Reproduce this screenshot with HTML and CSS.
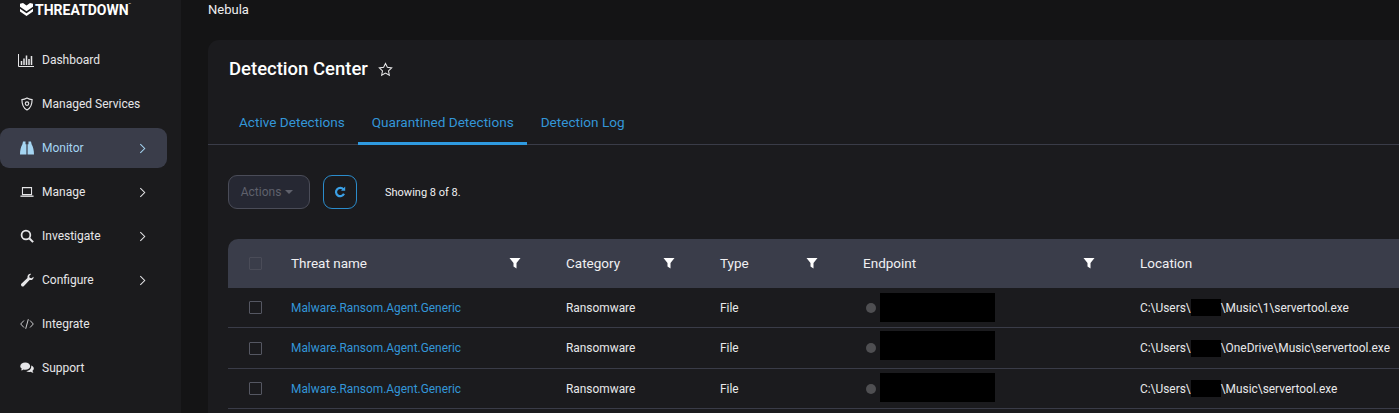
FILE: index.html
```html
<!DOCTYPE html>
<html lang="en">
<head>
  <meta charset="UTF-8">
  <title>Detection Center</title>
  <link rel="stylesheet" href="styles.css">
</head>
<body>

<div class="app">
  <aside class="sidebar">
    <div class="logo">
      <svg class="logo-mark" viewBox="0 0 13 13" fill="#fff"><path d="M0 .8 3 0l3.500 2.400L10 0l3 .8v3L6.500 8.200 0 3.800z"/><path d="M0 5.800l6.500 4.400L13 5.800v2.600L6.500 13 0 8.400z"/></svg>
      <span class="logo-text">THREATDOWN</span><span class="logo-tm">™</span>
    </div>
    <nav class="nav">
      <a class="nav-item">
        <svg class="nav-icon wide" viewBox="0 0 16 13" fill="none" stroke="currentColor"><path d="M.5 0v12.500H16" stroke-width="1"/><path d="M3.500 7v4M6 4.500V11M8.500 1.500V11M11 5v6M13.500 2v9" stroke-width="1.500"/></svg>
        <span>Dashboard</span>
      </a>
      <a class="nav-item">
        <svg class="nav-icon" viewBox="0 0 16 16" fill="none" stroke="currentColor" stroke-width="1.300"><path d="M8 1.200c2 1.200 3.800 1.700 5.800 1.800 0 5-1.500 9.500-5.800 11.800C3.700 12.500 2.200 8 2.200 3 4.200 2.900 6 2.400 8 1.200z"/><circle cx="8" cy="7.500" r="2"/></svg>
        <span>Managed Services</span>
      </a>
      <a class="nav-item active">
        <svg class="nav-icon" viewBox="0 0 14 14" fill="currentColor"><path d="M3 .5h2.500v2.800h.9v10.200H0c0-4.300.9-7.800 2.400-10.200zM11 .5H8.500v2.800h-.9v10.200H14c0-4.300-.9-7.800-2.400-10.200z"/></svg>
        <span>Monitor</span>
        <svg class="chevron" viewBox="0 0 8 12" fill="none" stroke="currentColor" stroke-width="1.200"><path d="M1.500 1 6.500 6l-5 5"/></svg>
      </a>
      <a class="nav-item">
        <svg class="nav-icon" viewBox="0 0 16 16" fill="none" stroke="currentColor" stroke-width="1.200"><path d="M2.800 3h10.400v8H2.800z"/><path d="M.5 12.800h15" stroke-width="1.500"/></svg>
        <span>Manage</span>
        <svg class="chevron" viewBox="0 0 8 12" fill="none" stroke="currentColor" stroke-width="1.200"><path d="M1.500 1 6.500 6l-5 5"/></svg>
      </a>
      <a class="nav-item">
        <svg class="nav-icon" viewBox="0 0 16 16" fill="none" stroke="currentColor" stroke-width="2"><circle cx="6.800" cy="6.800" r="5"/><path d="m10.500 10.500 4.500 4.500" stroke-width="2.400"/></svg>
        <span>Investigate</span>
        <svg class="chevron" viewBox="0 0 8 12" fill="none" stroke="currentColor" stroke-width="1.200"><path d="M1.500 1 6.500 6l-5 5"/></svg>
      </a>
      <a class="nav-item">
        <svg class="nav-icon" viewBox="0 0 16 16" fill="currentColor"><path d="M15.500 4.200c.4 2-1.400 4.200-3.700 3.900-.5-.1-.8 0-1.100.3l-6.200 6.500c-.8.8-2.100.8-2.800 0-.8-.8-.7-2 .1-2.800l6.400-6c.3-.3.4-.7.3-1.100C8.200 2.600 10.500.5 12.700 1l-2.200 2.300.5 2.200 2.200.5z"/></svg>
        <span>Configure</span>
        <svg class="chevron" viewBox="0 0 8 12" fill="none" stroke="currentColor" stroke-width="1.200"><path d="M1.500 1 6.500 6l-5 5"/></svg>
      </a>
      <a class="nav-item">
        <svg class="nav-icon" viewBox="0 0 16 16" fill="none" stroke="currentColor" stroke-width="1"><path d="M4.500 4 .8 8l3.700 4M11.500 4l3.700 4-3.700 4M9.500 2.500l-3 11"/></svg>
        <span>Integrate</span>
      </a>
      <a class="nav-item">
        <svg class="nav-icon" viewBox="0 0 16 16" fill="currentColor"><path d="M6 1.800c3.100 0 5.600 1.800 5.600 4.100S9.100 10 6 10c-.7 0-1.400-.1-2-.3-.8.6-1.800 1-3 1 .6-.6 1-1.300 1.100-2C.9 8 .3 7 .3 5.900.3 3.600 2.900 1.800 6 1.800z"/><path d="M12.800 5.200c1.800.5 3 1.800 3 3.400 0 1-.5 1.900-1.500 2.600.1.800.5 1.600 1.100 2.200-1.200 0-2.300-.4-3.100-1.100-.6.200-1.200.3-1.900.3-1.300 0-2.500-.4-3.300-1.100 3.500 0 6.200-2.500 5.700-6.300z"/></svg>
        <span>Support</span>
      </a>
    </nav>
  </aside>

  <main class="main">
    <div class="topbar">Nebula</div>
    <section class="card">
      <header class="card-head">
        <h1 class="card-title">Detection Center</h1>
        <svg class="star" viewBox="0 0 16 16" fill="none" stroke="currentColor" stroke-width="1.100"><path d="m8 1.500 2 4.200 4.600.6-3.400 3.200.9 4.600L8 11.800l-4.100 2.300.9-4.600L1.400 6.300 6 5.700z"/></svg>
      </header>

      <div class="tabs">
        <a class="tab">Active Detections</a>
        <a class="tab selected">Quarantined Detections</a>
        <a class="tab">Detection Log</a>
      </div>

      <div class="toolbar">
        <button class="actions-btn">Actions <span class="caret"></span></button>
        <button class="refresh-btn">
          <svg viewBox="0 0 12 12" fill="none" stroke="currentColor" stroke-width="2.200"><path d="M10 7.800A4.200 4.200 0 1 1 9.500 3.400"/><path d="M11.200 .6v4.200H7z" fill="currentColor" stroke="none"/></svg>
        </button>
        <span class="showing">Showing 8 of 8.</span>
      </div>

      <div class="table">
        <div class="row head">
          <div class="cell-check"><span class="checkbox disabled"></span></div>
          <div class="cell-head">Threat name<svg class="filter" viewBox="0 0 12 12" fill="currentColor"><path d="M.5 1h11L7.500 6v5.500l-3-2V6z"/></svg></div>
          <div class="cell-head">Category<svg class="filter" viewBox="0 0 12 12" fill="currentColor"><path d="M.5 1h11L7.500 6v5.500l-3-2V6z"/></svg></div>
          <div class="cell-head">Type<svg class="filter" viewBox="0 0 12 12" fill="currentColor"><path d="M.5 1h11L7.500 6v5.500l-3-2V6z"/></svg></div>
          <div class="cell-head">Endpoint<svg class="filter" viewBox="0 0 12 12" fill="currentColor"><path d="M.5 1h11L7.500 6v5.500l-3-2V6z"/></svg></div>
          <div class="cell-head">Location</div>
        </div>

        <div class="row">
          <div class="cell-check"><span class="checkbox"></span></div>
          <a class="threat">Malware.Ransom.Agent.Generic</a>
          <div>Ransomware</div>
          <div>File</div>
          <div class="endpoint"><span class="dot"></span><span class="redact-host"></span></div>
          <div class="location">C:\Users\<span class="redact-user"></span>\Music\1\servertool.exe</div>
        </div>
        <div class="row">
          <div class="cell-check"><span class="checkbox"></span></div>
          <a class="threat">Malware.Ransom.Agent.Generic</a>
          <div>Ransomware</div>
          <div>File</div>
          <div class="endpoint"><span class="dot"></span><span class="redact-host"></span></div>
          <div class="location">C:\Users\<span class="redact-user"></span>\OneDrive\Music\servertool.exe</div>
        </div>
        <div class="row">
          <div class="cell-check"><span class="checkbox"></span></div>
          <a class="threat">Malware.Ransom.Agent.Generic</a>
          <div>Ransomware</div>
          <div>File</div>
          <div class="endpoint"><span class="dot"></span><span class="redact-host"></span></div>
          <div class="location">C:\Users\<span class="redact-user"></span>\Music\servertool.exe</div>
        </div>
      </div>
    </section>
  </main>
</div>

</body>
</html>
```

FILE: styles.css
```css
html, body {
  height: 100%;
  margin: 0;
  overflow: hidden;
}

body {
  font-family: Roboto, sans-serif;
  font-size: 12px;
  color: #e8e8ea;
  background: #141415;
}

.app {
  display: flex;
  height: 413px;
  overflow: hidden;
}

/* sidebar */
.sidebar {
  flex: 0 0 181px;
  background: #1b1b1d;
}

.logo {
  display: flex;
  align-items: center;
  height: 19px;
  padding-left: 20px;
  color: #fff;
}

.logo-mark {
  flex: none;
  width: 13px;
  height: 13px;
  margin-right: 2px;
}

.logo-text {
  font-size: 14px;
  font-weight: 700;
}

.logo-tm {
  font-size: 4px;
  margin-bottom: 10px;
}

.nav {
  display: flex;
  flex-direction: column;
  gap: 4px;
  margin-top: 21px;
  width: 167px;
}

.nav-item {
  display: flex;
  align-items: center;
  height: 40px;
  padding-left: 20px;
  border-radius: 9px;
  color: #e6e6e8;
}

.nav-item.active {
  background: #3a3d4a;
  color: #a5d5f2;
}

.nav-icon {
  flex: none;
  width: 14px;
  height: 14px;
  margin-right: 8px;
}

.nav-icon.wide {
  width: 16px;
  height: 13px;
  margin-left: -2px;
}

.chevron {
  width: 7px;
  height: 11px;
  margin-left: auto;
  margin-right: 21px;
}

/* main area */
.main {
  flex: 1;
  min-width: 0;
  padding-left: 27px;
}

.topbar {
  height: 40px;
  padding-top: 2px;
  box-sizing: border-box;
  font-size: 13px;
  line-height: 16px;
  color: #eeeeef;
}

.card {
  width: 1300px;
  height: 400px;
  background: #1b1b1e;
  border-radius: 11px 0 0 0;
}

.card-head {
  display: flex;
  align-items: center;
  box-sizing: border-box;
  height: 56px;
  padding: 2px 0 0 21px;
}

.card-title {
  margin: 0;
  font-size: 18.5px;
  font-weight: 500;
  color: #fff;
}

.star {
  width: 15px;
  height: 15px;
  margin-left: 10px;
  color: #e8e8ea;
}

.tabs {
  display: flex;
  height: 48px;
  padding-left: 17.5px;
  border-bottom: 1px solid #3a3c48;
}

.tab {
  display: flex;
  align-items: center;
  padding: 4px 13.5px 0;
  height: 100%;
  font-size: 13.6px;
  color: #3396d8;
  box-sizing: border-box;
}

.tab.selected {
  height: calc(100% + 1px);
  border-bottom: 3px solid #2f9ae0;
  padding-top: 5px;
}

.toolbar {
  display: flex;
  align-items: center;
  height: 34px;
  margin: 30px 0 30px 20px;
}

.actions-btn {
  width: 82px;
  height: 34px;
  padding: 0 4px 0 0;
  background: #262833;
  border: 1px solid #4a4c58;
  border-radius: 9px;
  color: #5f616c;
  font: 12px Roboto, sans-serif;
}

.caret {
  display: inline-block;
  border: 4px solid transparent;
  border-top-color: #5f616c;
  border-bottom: 0;
  vertical-align: 2px;
  margin-left: 1px;
}

.refresh-btn {
  display: flex;
  align-items: center;
  justify-content: center;
  width: 34px;
  height: 34px;
  margin-left: 13px;
  padding: 0;
  background: none;
  border: 1px solid #2b8ccc;
  border-radius: 9px;
  color: #3ba0e6;
}

.refresh-btn svg {
  width: 12px;
  height: 12px;
}

.showing {
  margin-left: 28px;
  font-size: 11px;
  color: #f0f0f2;
}

/* table */
.table {
  margin-left: 20px;
}

.row {
  display: grid;
  grid-template-columns: 63px 275px 154px 143px 277px 1fr;
  align-items: center;
  height: 40.5px;
  padding-top: 1px;
  box-sizing: border-box;
  border-bottom: 1px solid #3a3c48;
  font-size: 11.9px;
  color: #e8e8ea;
}

.row.head {
  height: 48.5px;
  padding-top: 0;
  background: #3a3d4a;
  border-bottom: 0;
  border-radius: 10px 0 0 0;
  font-size: 13.5px;
  color: #f0f0f2;
}

.cell-check {
  padding-left: 21px;
  display: flex;
}

.checkbox {
  width: 11px;
  height: 11px;
  border: 1px solid #555762;
  border-radius: 1px;
}

.checkbox.disabled {
  border-color: #4a4c58;
  background: #3a3d4a;
}

.cell-head {
  display: flex;
  align-items: center;
  justify-content: space-between;
  padding-right: 45px;
}

.filter {
  width: 12px;
  height: 12px;
  color: #fff;
}

.threat {
  color: #3396d8;
}

.endpoint {
  display: flex;
  align-items: center;
  padding-left: 3px;
}

.dot {
  width: 10px;
  height: 10px;
  border-radius: 50%;
  background: #4f4f52;
}

.redact-host {
  width: 115px;
  height: 29px;
  margin-left: 4px;
  background: #000;
}

.row:nth-child(3) .redact-host {
  margin-bottom: 5px;
}

.row:nth-child(4) .redact-host {
  margin-bottom: 2px;
}

.location {
  display: flex;
  align-items: center;
}

.redact-user {
  width: 30px;
  height: 17px;
  background: #000;
}
```
